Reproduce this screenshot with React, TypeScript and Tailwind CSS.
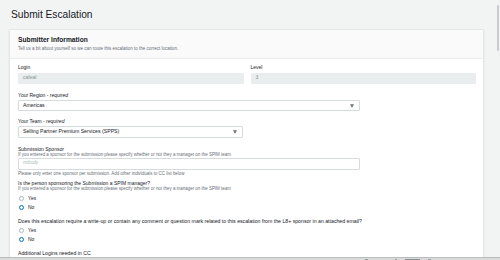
import React from 'react';

const font = { fontFamily: '"Liberation Sans", Arial, sans-serif' };

function Radio({ label, checked }: { label: string; checked?: boolean }) {
  return (
    <div className="flex items-center h-[9px] gap-[4px] pl-[1px]">
      {checked ? (
        <span className="w-[5px] h-[5px] rounded-full border-[1.5px] border-[#0073bb] bg-white" />
      ) : (
        <span className="w-[5px] h-[5px] rounded-full border border-[#aab7b8] bg-white" />
      )}
      <span className="text-[5px] leading-[6px] text-[#16191f]">{label}</span>
    </div>
  );
}

function Caret() {
  return (
    <svg width="4" height="4" viewBox="0 0 4 4" className="shrink-0">
      <rect x="0.3" y="0" width="3.4" height="0.7" fill="#545b64" />
      <path d="M0.3 1.2 H3.7 L2 3.6 Z" fill="#545b64" />
    </svg>
  );
}

export default function App() {
  return (
    <div className="relative w-[500px] h-[260px] overflow-hidden bg-[#f2f3f3]" style={font}>
      {/* page title */}
      <h1 className="pl-[11px] pt-[9px] text-[10.2px] leading-[12px] text-[#16191f]">Submit Escalation</h1>

      {/* card */}
      <div className="mt-[8px] ml-[9px] w-[475px] bg-white border border-[#e4e7e8] shadow-[0_1px_1px_rgba(0,28,36,0.15)]">
        <div className="h-[29px] bg-[#fafafa] border-b border-[#eaeded] pl-[8px] pt-[6px]">
          <div className="text-[6.7px] leading-[8px] font-bold text-[#16191f]">Submitter Information</div>
          <div className="mt-[2px] text-[4.5px] leading-[5px] text-[#687078]">
            Tell us a bit about yourself so we can route this escalation to the correct location.
          </div>
        </div>

        <div className="pl-[8px] pr-[7px] pt-[5px]">
          {/* login / level */}
          <div className="grid grid-cols-2 gap-x-[7px]">
            <div>
              <div className="text-[5px] leading-[6px] text-[#16191f]">Login</div>
              <div className="mt-[2.5px] h-[11px] bg-[#eaeded] border border-[#eaeded] rounded-[1px] flex items-center pl-[4px] text-[5px] text-[#879596]">cafeal</div>
            </div>
            <div>
              <div className="text-[5px] leading-[6px] text-[#16191f]">Level</div>
              <div className="mt-[2.5px] h-[11px] bg-[#eaeded] border border-[#eaeded] rounded-[1px] flex items-center pl-[4px] text-[5px] text-[#879596]">3</div>
            </div>
          </div>

          {/* region */}
          <div className="mt-[8.5px] text-[5px] leading-[6px] text-[#16191f]">
            Your Region - <i>required</i>
          </div>
          <div className="mt-[2px] w-[342px] h-[11px] border border-[#d5dbdb] rounded-[1px] flex items-center justify-between pl-[4px] pr-[5px] text-[5.2px] text-[#16191f]">
            <span>Americas</span>
            <Caret />
          </div>

          {/* team */}
          <div className="mt-[7px] text-[5px] leading-[6px] text-[#16191f]">
            Your Team - <i>required</i>
          </div>
          <div className="mt-[2px] w-[225px] h-[12px] border border-[#d5dbdb] rounded-[1px] flex items-center justify-between pl-[4px] pr-[5px] text-[5.2px] text-[#16191f]">
            <span>Selling Partner Premium Services (SPPS)</span>
            <Caret />
          </div>

          {/* sponsor */}
          <div className="mt-[7.5px] text-[5px] leading-[6px] text-[#16191f]">Submission Sponsor</div>
          <div className="text-[4.45px] leading-[5px] text-[#687078]">
            If you entered a sponsor for the submission please specify whether or not they a manager on the SPIM team
          </div>
          <div className="mt-[1px] w-[342px] h-[12px] border border-[#d5dbdb] rounded-[1px] flex items-center pl-[4px] text-[4.6px] italic text-[#aab7b8]">
            nobody
          </div>
          <div className="mt-[1.5px] text-[4.45px] leading-[5px] text-[#687078]">
            Please only enter one sponsor per submission. Add other individuals to CC list below
          </div>

          {/* question 1 */}
          <div className="mt-[3.5px] text-[5px] leading-[6px] text-[#16191f]">
            Is the person sponsoring the Submission a SPIM manager?
          </div>
          <div className="text-[4.45px] leading-[5px] text-[#687078]">
            If you entered a sponsor for the submission please specify whether or not they a manager on the SPIM team
          </div>
          <div className="mt-[3px]">
            <Radio label="Yes" />
            <Radio label="No" checked />
          </div>

          {/* question 2 */}
          <div className="mt-[6px] text-[5.2px] leading-[6px] text-[#16191f]">
            Does this escalation require a write-up or contain any comment or question mark related to this escalation from the L8+ sponsor in an attached email?
          </div>
          <div className="mt-[2px]">
            <Radio label="Yes" />
            <Radio label="No" checked />
          </div>

          <div className="mt-[6px] text-[5.2px] leading-[6px] text-[#16191f]">Additional Logins needed in CC</div>
          <div className="h-[20px]" />
        </div>
      </div>

      {/* window scrollbar thumb */}
      <div className="absolute right-[1px] top-[5px] w-[2px] h-[46px] rounded-full bg-[#c9cccc]" />

      {/* bottom strip */}
      <div className="absolute left-0 bottom-0 w-full h-[3px] bg-[#d9dbdb] border-t border-[#b9bdbd] flex items-center">
        <span className="absolute left-[365px] w-[3px] h-[1px] bg-[#9aa0a0]" />
        <span className="absolute left-[395px] w-[2px] h-[1px] bg-[#9aa0a0]" />
        <span className="absolute left-[405px] w-[15px] h-[1px] bg-[#8a9090]" />
        <span className="absolute left-[428px] w-[3px] h-[1px] bg-[#9aa0a0]" />
      </div>
    </div>
  );
}
